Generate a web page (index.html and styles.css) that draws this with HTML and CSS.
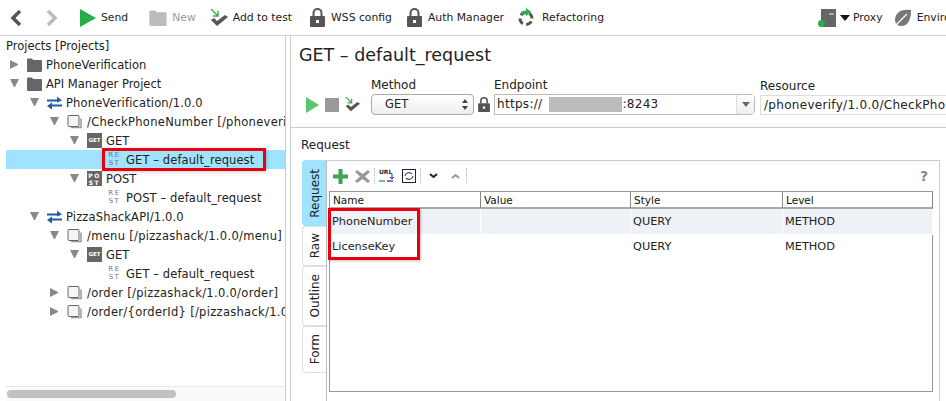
FILE: index.html
```
<!DOCTYPE html>
<html>
	<head>
		<meta charset="UTF-8">
		<title>SoapUI</title>
		<link rel="stylesheet" href="styles.css">
	</head>

	<body>

		<svg class="defs" width="0" height="0">
			<symbol id="lock" viewBox="0 0 15 19">
				<path d="M1 8h13a1 1 0 0 1 1 1v9a1 1 0 0 1-1 1H1a1 1 0 0 1-1-1V9a1 1 0 0 1 1-1z M6 12v3h3v-3z" fill-rule="evenodd"/>
				<path d="M3.500 8V5a4 4 0 0 1 8 0v3" fill="none" stroke="currentColor" stroke-width="2"/>
			</symbol>
			<symbol id="folder" viewBox="0 0 15 14">
				<path d="M0 1.500a1 1 0 0 1 1-1h4l1 1.500h8a1 1 0 0 1 1 1V13a1 1 0 0 1-1 1H1a1 1 0 0 1-1-1z"/>
			</symbol>
			<symbol id="swap" viewBox="0 0 15 13">
				<path d="M0 3h10V0l5 4-5 2V5H0z M15 8H5V6L0 9.500 5 13v-3h10z" fill="#1f5aa8"/>
			</symbol>
			<symbol id="pages" viewBox="0 0 14 14">
				<path d="M3.500 12.500h10v-9" fill="none" stroke="#999" stroke-width="1.500"/>
				<rect x="0.500" y="0.500" width="11" height="11" rx="1" fill="#f4f4f4" stroke="#666"/>
			</symbol>
			<symbol id="addtest" viewBox="0 0 18 18">
				<path d="M1 11l3-2 3 3 8-6 3 2-11 9z" fill="#555"/>
				<path d="M1 0l7 7M8 2v5H3" fill="none" stroke="#2eb14a" stroke-width="1.400"/>
			</symbol>
		</svg>

		<header class="toolbar">
			<svg class="tool-back" width="12" height="18" viewBox="0 0 12 18"><path d="M10 2L3 9l7 7" fill="none" stroke="#555" stroke-width="3.500"/></svg>
			<svg class="tool-fwd" width="12" height="18" viewBox="0 0 12 18"><path d="M2 2l7 7-7 7" fill="none" stroke="#bbb" stroke-width="3.500"/></svg>
			<div class="tool tool-send">
				<svg width="16" height="18" viewBox="0 0 16 18"><path d="M0 0l16 9-16 9z" fill="#25ad47"/></svg>
				<span>Send</span>
			</div>
			<div class="tool tool-new muted">
				<svg width="18" height="16" fill="#bbb"><use href="#folder"/></svg>
				<span>New</span>
			</div>
			<div class="tool tool-add">
				<svg width="18" height="18"><use href="#addtest"/></svg>
				<span>Add to test</span>
			</div>
			<div class="tool tool-wss">
				<svg class="lock" width="15" height="19"><use href="#lock"/></svg>
				<span>WSS config</span>
			</div>
			<div class="tool tool-auth">
				<svg class="lock" width="15" height="19"><use href="#lock"/></svg>
				<span>Auth Manager</span>
			</div>
			<div class="tool tool-ref">
				<svg width="18" height="19" viewBox="0 0 18 19">
					<circle cx="9" cy="10.500" r="6" fill="none" stroke="#555" stroke-width="3" stroke-dasharray="6 3.400" stroke-dashoffset="-3"/>
					<path d="M4.500 5.500a6 6 0 0 1 4.500-1.500" fill="none" stroke="#2eb14a" stroke-width="3"/>
					<path d="M9 0l5.500 4L9 8z" fill="#2eb14a"/>
				</svg>
				<span>Refactoring</span>
			</div>
			<div class="tool tool-proxy">
				<svg width="19" height="18" viewBox="0 0 19 18">
					<rect x="3" y="0" width="15" height="18" fill="#666"/>
					<rect x="11" y="4" width="5" height="2" fill="#aaa"/>
					<circle cx="3.500" cy="14.500" r="3.500" fill="#25ad47"/>
				</svg>
				<i class="caret"></i>
				<span>Proxy</span>
			</div>
			<div class="tool tool-env">
				<svg width="18" height="18" viewBox="0 0 18 18">
					<path d="M17 1C8 0 1 3 1 11c0 3 2 6 6 6 8 0 10-8 10-16z" fill="#777"/>
					<path d="M2 16L13 5" stroke="#fff" stroke-width="1.200"/>
				</svg>
				<span>Environment</span>
			</div>
		</header>

		<main class="workspace">

			<nav class="projects">
				<div class="tree">
					<div class="tree-head">Projects [Projects]</div>

					<div class="row d0"><i class="arrow closed"></i><svg class="icon" fill="#666"><use href="#folder"/></svg><span>PhoneVerification</span></div>
					<div class="row d0"><i class="arrow open"></i><svg class="icon" fill="#666"><use href="#folder"/></svg><span>API Manager Project</span></div>
					<div class="row d1"><i class="arrow open"></i><svg class="icon"><use href="#swap"/></svg><span>PhoneVerification/1.0.0</span></div>
					<div class="row d2"><i class="arrow open"></i><svg class="icon"><use href="#pages"/></svg><span>/CheckPhoneNumber [/phoneverify/1.0.0/CheckPhoneNumber]</span></div>
					<div class="row d3"><i class="arrow open"></i><b class="badge">GET</b><span>GET</span></div>
					<div class="row d4 selected"><i class="arrow"></i><div class="hit"><b class="rest">RE<br>ST</b><span>GET – default_request</span></div></div>
					<div class="row d3"><i class="arrow open"></i><b class="badge post">PO<br>ST</b><span>POST</span></div>
					<div class="row d4"><i class="arrow"></i><b class="rest">RE<br>ST</b><span>POST – default_request</span></div>
					<div class="row d1"><i class="arrow open"></i><svg class="icon"><use href="#swap"/></svg><span>PizzaShackAPI/1.0.0</span></div>
					<div class="row d2"><i class="arrow open"></i><svg class="icon"><use href="#pages"/></svg><span>/menu [/pizzashack/1.0.0/menu]</span></div>
					<div class="row d3"><i class="arrow open"></i><b class="badge">GET</b><span>GET</span></div>
					<div class="row d4"><i class="arrow"></i><b class="rest">RE<br>ST</b><span>GET – default_request</span></div>
					<div class="row d2"><i class="arrow closed"></i><svg class="icon"><use href="#pages"/></svg><span>/order [/pizzashack/1.0.0/order]</span></div>
					<div class="row d2"><i class="arrow closed"></i><svg class="icon"><use href="#pages"/></svg><span>/order/{orderId} [/pizzashack/1.0.0/order/{orderId}]</span></div>
				</div>
				<div class="hscroll"><div class="hscroll-thumb"></div></div>
			</nav>

			<section class="editor">
				<h1>GET – default_request</h1>

				<div class="request-bar">
					<div class="run-icons">
						<svg width="13" height="16" viewBox="0 0 13 16"><path d="M0 0l13 8-13 8z" fill="#5ac46e"/></svg>
						<span class="stop"></span>
						<svg width="15" height="15"><use href="#addtest"/></svg>
					</div>
					<div class="field field-method">
						<label>Method</label>
						<div class="select">GET<i class="updown"></i></div>
					</div>
					<svg class="lock field-lock" width="12" height="15"><use href="#lock"/></svg>
					<div class="field field-endpoint">
						<label>Endpoint</label>
						<div class="combo">
							<span class="combo-text">https://<i class="blur"></i>:8243</span>
							<span class="combo-btn"><i class="caret small"></i></span>
						</div>
					</div>
					<div class="field field-resource">
						<label>Resource</label>
						<div class="input">/phoneverify/1.0.0/CheckPhoneNumber</div>
					</div>
				</div>

				<div class="request">
					<div class="request-title">Request</div>
					<div class="request-body">
						<div class="tabs">
							<div class="tab tab-request active"><span>Request</span></div>
							<div class="tab tab-raw"><span>Raw</span></div>
							<div class="tab tab-outline"><span>Outline</span></div>
							<div class="tab tab-form"><span>Form</span></div>
						</div>
						<div class="pane">
							<div class="pane-tools">
								<svg width="15" height="15" viewBox="0 0 15 15"><path d="M5.500 0h4v5.500H15v4H9.500V15h-4V9.500H0v-4h5.500z" fill="#3aa655"/></svg>
								<svg class="del" width="15" height="15" viewBox="0 0 15 15"><path d="M2 1l5.500 4L13 1l2 2-5 4.500 5 4.500-2 2-5.500-4L2 14l-2-2 5-4.500L0 3z" fill="#999"/></svg>
								<i class="sep"></i>
								<svg width="18" height="14" viewBox="0 0 18 14">
									<text x="0" y="5" font-size="6" font-weight="700" font-family="DejaVu Sans" fill="#223">URL</text>
									<path d="M0 12h6" stroke="#2eb14a" stroke-width="1.400"/>
									<path d="M8 12h6" stroke="#2a3fd0" stroke-width="1.400"/>
									<path d="M13 5v4M11 8l2 2 2-2" fill="none" stroke="#333"/>
								</svg>
								<svg class="sync" width="14" height="14" viewBox="0 0 14 14">
									<rect x="0.500" y="0.500" width="13" height="13" fill="#fff" stroke="#223"/>
									<path d="M3 7a4 4 0 0 1 7-2M11 7a4 4 0 0 1-7 2" fill="none" stroke="#357" stroke-width="1.200"/>
								</svg>
								<i class="sep"></i>
								<svg class="down" width="9" height="6" viewBox="0 0 9 6"><path d="M1 1l3.500 3L8 1" fill="none" stroke="#222" stroke-width="2"/></svg>
								<svg class="up" width="9" height="6" viewBox="0 0 9 6"><path d="M1 5l3.500-3L8 5" fill="none" stroke="#999" stroke-width="2"/></svg>
								<i class="sep sep-end"></i>
								<span class="help">?</span>
							</div>
							<div class="table">
								<div class="thead">
									<div>Name</div>
									<div>Value</div>
									<div>Style</div>
									<div>Level</div>
								</div>
								<div class="tr odd">
									<div>PhoneNumber</div>
									<div></div>
									<div>QUERY</div>
									<div>METHOD</div>
								</div>
								<div class="tr">
									<div>LicenseKey</div>
									<div></div>
									<div>QUERY</div>
									<div>METHOD</div>
								</div>
								<div class="mark"></div>
							</div>
						</div>
					</div>
				</div>
			</section>

		</main>

	</body>

</html>
```

FILE: styles.css
```
* { margin: 0; padding: 0; box-sizing: border-box }

html, body { height: 100%; overflow: hidden }

body {
	width: 946px;
	height: 401px;
	background: #fff;
	color: #222;
	font-family: "DejaVu Sans", sans-serif;
	font-size: 11.5px;
	display: flex;
	flex-direction: column;
}

svg { flex: none }

.defs { position: absolute }
.lock { color: #555; fill: #555 }

/* top toolbar */

.toolbar {
	height: 36px;
	flex: none;
	display: flex;
	align-items: center;
	border-bottom: 1px solid #ccc;
	white-space: nowrap;
	overflow: hidden;
	padding-left: 10px;
	font-size: 10.8px;
}

.tool { display: flex; align-items: center; gap: 6px; flex: none }
.muted { color: #999 }

.tool-fwd { margin-left: 24px }
.tool-send { margin-left: 22px; gap: 5px }
.tool-new { margin-left: 21px; gap: 5px }
.tool-add { margin-left: 14px; gap: 5px }
.tool-wss { margin-left: 18px }
.tool-auth { margin-left: 15px }
.tool-ref { margin-left: 13px; gap: 7px }
.tool-proxy { margin-left: 214px; gap: 3px }
.tool-env { margin-left: 11px; gap: 5px }

.caret {
	width: 0;
	height: 0;
	border-left: 5px solid transparent;
	border-right: 5px solid transparent;
	border-top: 6px solid #111;
}

.caret.small {
	display: block;
	border-left-width: 4px;
	border-right-width: 4px;
	border-top: 5px solid #666;
}

/* layout */

.workspace { flex: 1; min-height: 0; display: flex }

.projects {
	width: 286px;
	flex: none;
	padding-left: 6px;
	border-right: 1px solid #ccc;
	display: flex;
	flex-direction: column;
}

.editor {
	flex: 1;
	min-width: 0;
	margin-left: 4px;
	border-left: 1px solid #ccc;
	overflow: hidden;
	display: flex;
	flex-direction: column;
}

/* project tree */

.tree { flex: 1; min-height: 0; overflow: hidden }
.tree-head { height: 19px; line-height: 20px }

.row {
	height: 19px;
	display: flex;
	align-items: center;
	white-space: nowrap;
	overflow: hidden;
}

.d0 { padding-left: 4px }
.d1 { padding-left: 24px; letter-spacing: .15px }
.d2 { padding-left: 44px; letter-spacing: .3px }
.d3 { padding-left: 64px }
.d4 { padding-left: 84px }

.row span { margin-left: 4px }
.d2 > span { margin-left: 5px }
.d4 span { letter-spacing: .1px }

.selected { background: #9fe3ff; overflow: visible }

.hit {
	height: 17px;
	width: 158px;
	margin-left: -2px;
	padding-left: 2px;
	display: flex;
	align-items: center;
	outline: 3px solid #e8000f;
	box-shadow: 1px 1px 4px 3px rgba(0, 0, 0, .2);
}

.arrow { width: 9px; height: 9px; flex: none; margin-right: 8px; display: block }
.arrow.open {
	border-left: 4.500px solid transparent;
	border-right: 4.500px solid transparent;
	border-top: 8px solid #888;
}
.arrow.closed {
	border-top: 4.500px solid transparent;
	border-bottom: 4.500px solid transparent;
	border-left: 8px solid #888;
}

.icon { width: 15px; height: 14px; flex: none }

.badge {
	width: 15px;
	height: 15px;
	flex: none;
	background: #666;
	color: #fff;
	font-size: 5.500px;
	line-height: 15px;
	text-align: center;
	font-weight: 700;
}

.badge.post { font-size: 6px; line-height: 7px; letter-spacing: 1.500px; padding-top: 1px }

.rest {
	width: 15px;
	height: 15px;
	flex: none;
	color: #777;
	font-size: 7px;
	font-weight: 400;
	line-height: 7.500px;
	letter-spacing: 1.500px;
	text-align: center;
}

.hscroll {
	height: 15px;
	flex: none;
	background: #fafafa;
	border-top: 1px solid #e8e8e8;
	padding: 3px 0 0 1px;
}

.hscroll-thumb { width: 169px; height: 8px; border-radius: 4px; background: #c1c1c1 }

/* request editor */

h1 {
	font-size: 17.5px;
	font-weight: 400;
	height: 37px;
	line-height: 38px;
	padding-left: 8px;
	white-space: nowrap;
}

.request-bar {
	height: 55px;
	flex: none;
	display: flex;
	align-items: flex-end;
	border-bottom: 1px solid #ccc;
	padding: 0 0 12px 15px;
	white-space: nowrap;
}

.run-icons { width: 65px; flex: none; height: 21px; display: flex; align-items: center; gap: 6px }
.stop { width: 14px; height: 14px; background: #999 }

.field label { display: block; height: 16px; line-height: 14px; font-size: 12px }
.field-method { width: 103px; flex: none }
.field-lock { margin: 0 4px 3px; flex: none }
.field-endpoint { width: 261px; flex: none }
.field-resource { flex: 1; margin-left: 5px; min-width: 0 }

.select {
	height: 21px;
	line-height: 19px;
	padding-left: 13px;
	border: 1px solid #aaa;
	border-radius: 4px;
	background: linear-gradient(#fff, #eee);
	position: relative;
}

.updown { position: absolute; right: 5px; top: 4px; width: 6px; height: 11px }
.updown::before, .updown::after {
	content: "";
	position: absolute;
	left: 0;
	border-left: 3px solid transparent;
	border-right: 3px solid transparent;
}
.updown::before { top: 0; border-bottom: 4px solid #444 }
.updown::after { bottom: 0; border-top: 4px solid #444 }

.combo {
	height: 21px;
	display: flex;
	border: 1px solid #bbb;
	border-radius: 0 4px 4px 0;
}

.combo-text { flex: 1; line-height: 19px; padding-left: 2px; font-size: 12px; letter-spacing: .3px; display: flex }
.blur { width: 73px; height: 15px; margin: 2px 0 0 7px; background: #bbb; display: block }

.combo-btn {
	width: 18px;
	flex: none;
	display: flex;
	align-items: center;
	justify-content: center;
	background: linear-gradient(#fff, #eee);
	border-left: 1px solid #ddd;
}

.input {
	height: 20px;
	line-height: 19px;
	padding-left: 3px;
	border: 1px solid #ddd;
	border-right: 0;
	font-size: 12px;
	letter-spacing: .3px;
	overflow: hidden;
}

.request { flex: 1; min-height: 0; padding-left: 10px; display: flex; flex-direction: column }
.request-title { height: 32px; flex: none; line-height: 34px; font-size: 12px }
.request-body { flex: 1; min-height: 0; display: flex; padding-left: 1px }

.tabs { width: 24px; flex: none; display: flex; flex-direction: column }

.tab {
	flex: none;
	display: flex;
	align-items: center;
	justify-content: center;
	border: 1px solid #ddd;
	border-right: 0;
	border-radius: 4px 0 0 4px;
	background: #fff;
}

.tab span { writing-mode: vertical-rl; transform: rotate(180deg); font-size: 12px }
.tab-request { height: 66px; background: #9fe3ff; border-color: #9fe3ff }
.tab-raw { height: 40px }
.tab-outline { height: 60px }
.tab-form { height: 47px }

.pane {
	width: 614px;
	flex: none;
	border: 1px solid #ccc;
	border-bottom: 0;
	border-left-color: #bbb;
	padding: 0 6px 9px 2px;
	display: flex;
	flex-direction: column;
}

.pane-tools { height: 30px; flex: none; display: flex; align-items: center; padding-left: 4px; gap: 4px }
.pane-tools .del { margin-left: 3px }
.pane-tools .sync { margin-left: 1px }
.pane-tools .down { margin-left: 4px }
.pane-tools .up { margin-left: 9px }
.sep { width: 0; height: 16px; border-left: 1px dotted #bbb; flex: none }
.sep-end { margin-left: 2px; margin-right: auto }
.help { color: #888; font-weight: 700; font-size: 14px; padding-right: 5px }

.table { flex: 1; min-height: 0; border: 1px solid #999; position: relative; font-size: 11.3px }

.thead, .tr { display: grid; grid-template-columns: 151px 150px 152px 150px }
.thead { height: 17px; line-height: 16px; border-bottom: 2px solid #aaa; font-size: 10.500px; color: #111 }
.thead > div { padding-left: 3px; border-right: 1px solid #888 }
.tr { height: 25px; line-height: 26px }
.tr > div { padding-left: 2px; white-space: nowrap }
.odd { background: #eef1f5 }
.odd > div { border-right: 1px solid #fff }

.mark {
	position: absolute;
	left: -2px;
	top: 16px;
	width: 92px;
	height: 52px;
	border: 3px solid #e8000f;
	box-shadow: 1px 1px 2px rgba(0, 0, 0, .25);
}
```
